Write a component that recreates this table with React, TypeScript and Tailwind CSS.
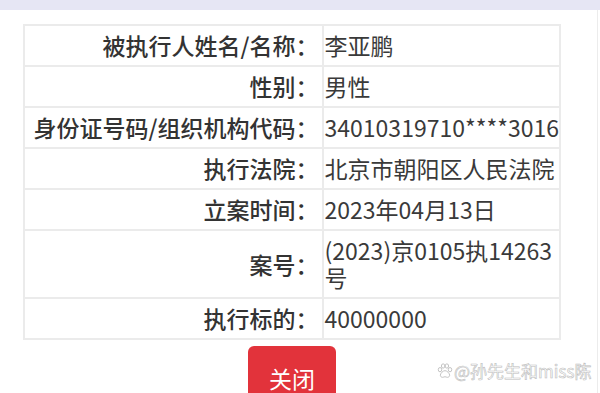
import React from 'react';

const rows: { label: string; value: string }[] = [
  { label: '被执行人姓名/名称：', value: '李亚鹏' },
  { label: '性别：', value: '男性' },
  { label: '身份证号码/组织机构代码：', value: '34010319710****3016' },
  { label: '执行法院：', value: '北京市朝阳区人民法院' },
  { label: '立案时间：', value: '2023年04月13日' },
  { label: '案号：', value: '(2023)京0105执14263号' },
  { label: '执行标的：', value: '40000000' },
];

const PawIcon = () => (
  <svg width="16" height="16" viewBox="0 0 24 24" fill="none" stroke="#c4c4c4" strokeWidth="1.5">
    <ellipse cx="4.5" cy="10" rx="2.6" ry="3.2" />
    <ellipse cx="9.2" cy="4.5" rx="2.6" ry="3.2" />
    <ellipse cx="14.8" cy="4.5" rx="2.6" ry="3.2" />
    <ellipse cx="19.5" cy="10" rx="2.6" ry="3.2" />
    <path d="M12 11.5c-3.2 0-7 4.2-7 6.8 0 2.1 1.7 3.2 3.4 3.2 1.5 0 2.3-.9 3.6-.9s2.1.9 3.6.9c1.7 0 3.4-1.1 3.4-3.2 0-2.6-3.8-6.8-7-6.8z" />
  </svg>
);

export default function App() {
  return (
    <div
      className="relative w-[600px] h-[393px] overflow-hidden bg-white"
      style={{ fontFamily: '"Noto Sans CJK SC", "Noto Sans", sans-serif' }}
    >
      <div className="h-[10px] bg-[#e6e6f4]" />
      <div className="h-[383px] w-[598px] border-r border-[#ececec] pt-[14px] pl-[23px]">
        <table className="w-[538px] border-collapse border-2 border-[#ebebeb] text-[23px] text-[#333]">
          <tbody>
            {rows.map((r) => (
              <tr key={r.label}>
                <td className="w-[303px] border-2 border-[#ebebeb] py-[6px] pr-[3px] text-right align-middle font-medium leading-[27px]">
                  {r.label}
                </td>
                <td className="border-2 border-[#ebebeb] py-[6px] pl-[1px] pr-0 align-middle leading-[27px] text-[#3a3a3a]">
                  {r.value}
                </td>
              </tr>
            ))}
          </tbody>
        </table>
        <div className="mt-[6px] flex w-[538px] justify-center">
          <button className="flex h-[72px] w-[88px] items-start justify-center rounded-[6px] bg-[#e2333b] pt-[21px] text-[23px] leading-[23px] text-white">
            关闭
          </button>
        </div>
      </div>
      <div className="absolute left-[437px] top-[359px] flex items-center gap-[1px] text-[17px] leading-[24px] text-white [-webkit-text-stroke:0.6px_#bdbdbd]">
        <PawIcon />
        <span>@孙先生和miss陈</span>
      </div>
    </div>
  );
}
